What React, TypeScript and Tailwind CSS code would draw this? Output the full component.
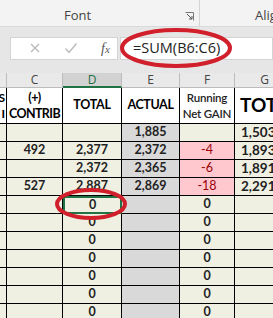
import React from "react";

const CELL = "font-['Lato','Liberation_Sans',sans-serif]";

type Row = {
  c?: string;
  d?: string;
  e?: string;
  f?: string;
  g?: string;
  neg?: boolean;
  sel?: boolean;
};

const rows: Row[] = [
  { e: "1,885", g: "1,503" },
  { c: "492", d: "2,377", e: "2,372", f: "-4", g: "1,893", neg: true },
  { d: "2,372", e: "2,365", f: "-6", g: "1,891", neg: true },
  { c: "527", d: "2,887", e: "2,869", f: "-18", g: "2,291", neg: true },
  { d: "0", f: "0", sel: true },
  { d: "0", f: "0" },
  { d: "0", f: "0" },
  { d: "0", f: "0" },
  { d: "0", f: "0" },
  { d: "0", f: "0" },
  { d: "0", f: "0" },
];

export default function App() {
  return (
    <div className="relative w-[273px] h-[318px] overflow-hidden bg-[#e6e6e6] font-['Open_Sans','Noto_Sans',sans-serif]">
      {/* Ribbon strip */}
      <div className="flex h-[27px] bg-[#f3f3f3] border-b border-[#dadada] text-[13px] text-[#444]">
        <div className="flex shrink-0 items-end justify-between w-[200px] pb-[1px] pl-[64px] pr-[5px] border-r border-[#d4d4d4]">
          <span>Font</span>
          <svg width="9" height="9" viewBox="0 0 9 9" className="mb-[4px]">
            <path d="M0.5 0.5h8v8" fill="none" stroke="#777" strokeWidth="1" />
            <path d="M2 2l5 5M4 7h3V4" fill="none" stroke="#555" strokeWidth="1" />
          </svg>
        </div>
        <div className="flex shrink-0 items-end pl-[55px] pb-[1px] whitespace-nowrap">Alignment</div>
      </div>

      {/* Formula bar */}
      <div className="flex items-center h-[37px] pt-[5px] pl-[10px] gap-[2px]">
        <div className="flex items-center w-[108px] h-[23px] bg-white border border-[#d4d4d4]">
          <svg width="12" height="12" viewBox="0 0 12 12" className="ml-[18px]">
            <path d="M2 2l8 8M10 2l-8 8" stroke="#b8b8b8" strokeWidth="1.3" />
          </svg>
          <svg width="14" height="12" viewBox="0 0 14 12" className="ml-[23px]">
            <path d="M1.5 6.5l3.5 4 7.5-9" fill="none" stroke="#b8b8b8" strokeWidth="1.3" />
          </svg>
          <span className="ml-[23px] text-[14px] italic text-[#555] font-['Liberation_Serif',serif]">
            f<span className="text-[11px]">x</span>
          </span>
        </div>
        <div className="flex items-center flex-1 h-[23px] bg-white border border-[#d4d4d4] pl-[12px] text-[14.5px] text-[#222]">
          =SUM(B6:C6)
        </div>
      </div>

      <div className="h-[9px]" />

      {/* Sheet grid */}
      <div className={`grid grid-cols-[7px_56px_59px_58px_55px_60px] w-[295px] ${CELL}`}>
        {/* column letters */}
        {["", "C", "D", "E", "F", "G"].map((l, i) => (
          <div
            key={l + i}
            className={`h-[15px] flex items-center justify-center text-[12px] leading-none font-['Open_Sans',sans-serif] border-r border-[#bcbcbc] ${
              l === "D"
                ? "bg-[#d2d2d2] text-[#1e6e42] border-b-2 border-b-[#217346]"
                : "bg-[#e9e9e9] text-[#444] border-b border-b-[#bcbcbc]"
            }`}
          >
            {l}
          </div>
        ))}

        {/* header labels */}
        <div className="h-[36px] bg-white border-r border-b border-black text-[12px] font-bold text-black flex flex-col justify-center items-end leading-[16px] overflow-hidden">
          <span className="mr-[1px]">S</span>
          <span className="mr-[1px]">I</span>
        </div>
        <div className="h-[36px] bg-white border-r border-b border-black flex flex-col items-center justify-center text-[12.5px] font-bold text-black leading-[16px] tracking-[-0.6px]">
          <span>(+)</span>
          <span>CONTRIB</span>
        </div>
        <div className="h-[36px] bg-white border-r border-b border-black flex items-center justify-center text-[12.5px] font-bold text-black tracking-[-0.3px]">
          TOTAL
        </div>
        <div className="h-[36px] bg-white border-r border-b border-black flex items-center justify-center text-[12.5px] font-bold text-black tracking-[-0.4px]">
          ACTUAL
        </div>
        <div className="h-[36px] bg-white border-r border-b border-black flex flex-col items-center justify-center text-[11.5px] font-semibold text-[#222] leading-[16px] tracking-[-0.2px]">
          <span>Running</span>
          <span>Net GAIN</span>
        </div>
        <div className="h-[36px] bg-white border-b border-black flex items-center pl-[5px] text-[19px] font-bold text-black">
          TOTAL
        </div>

        {rows.map((r, i) => (
          <React.Fragment key={i}>
            <div className="h-[18px] bg-[#eff0e2] border-r border-b border-black" />
            <div className="h-[18px] bg-[#eff0e2] border-r border-b border-black flex items-center justify-center text-[12.5px] font-bold text-[#222]">
              {r.c}
            </div>
            <div
              className={`h-[18px] bg-[#eff0e2] flex items-center justify-center text-[12.5px] font-bold text-[#222] ${
                r.sel ? "border-2 border-[#217346]" : "border-r border-b border-black"
              }`}
            >
              {r.d}
            </div>
            <div className="h-[18px] bg-[#d9d9d9] border-r border-b border-black flex items-center justify-center text-[12.5px] font-bold text-[#222]">
              {r.e}
            </div>
            <div
              className={`h-[18px] border-r border-b border-black flex items-center justify-center text-[12.5px] ${
                r.neg ? "bg-[#ffc7ce] text-[#9c0006]" : "bg-[#eff0e2] font-bold text-[#222]"
              }`}
            >
              {r.f}
            </div>
            <div className="h-[18px] bg-[#eff0e2] border-b border-black flex items-center pl-[6px] text-[13.5px] font-bold text-[#222]">
              {r.g}
            </div>
          </React.Fragment>
        ))}
      </div>

      {/* red annotation circles */}
      <svg className="absolute left-0 top-0 pointer-events-none" width="273" height="318">
        <ellipse cx="176" cy="48" rx="54" ry="18" fill="none" stroke="#d1202b" strokeWidth="4" />
        <ellipse cx="91" cy="204" rx="34" ry="14" fill="none" stroke="#d1202b" strokeWidth="4" />
      </svg>
    </div>
  );
}
